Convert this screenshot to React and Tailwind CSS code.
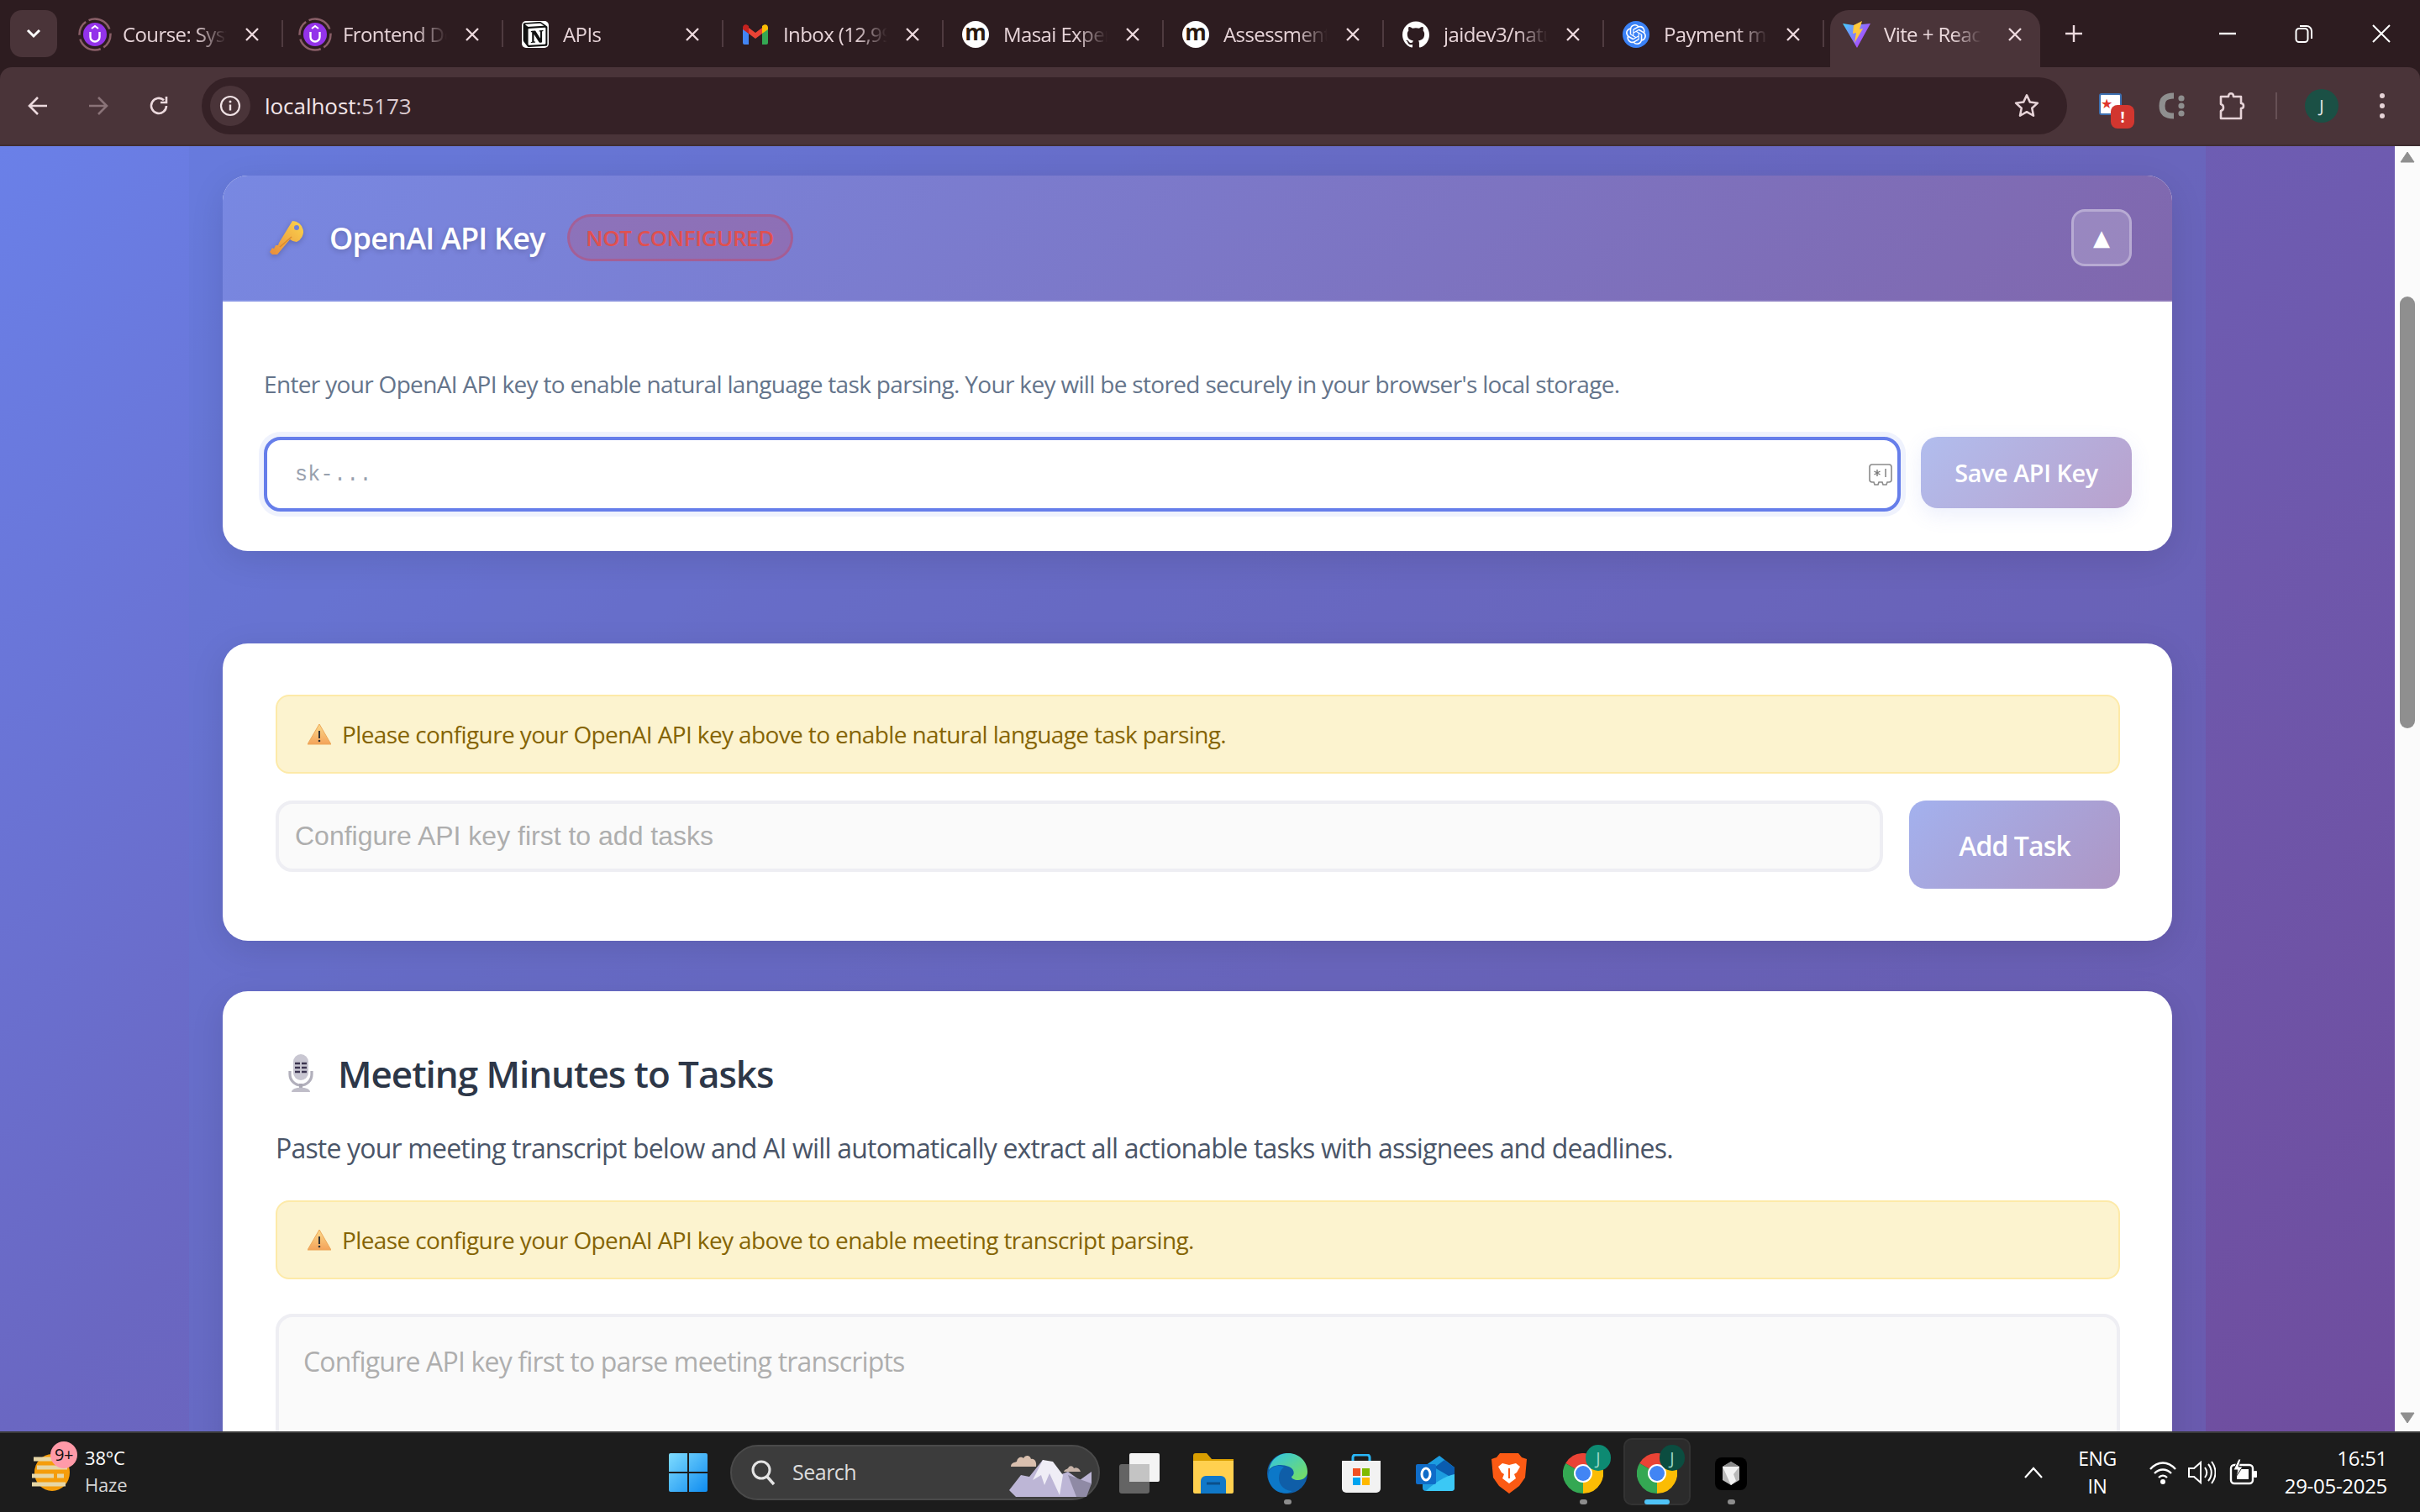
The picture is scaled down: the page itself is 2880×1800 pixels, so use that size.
import React from 'react'
import { SiNotion, SiGithub, SiOpenai } from 'react-icons/si'

const tabs = [
  { title: 'Course: System Design', icon: <UdemyIcon /> },
  { title: 'Frontend Developer', icon: <UdemyIcon /> },
  { title: 'APIs', icon: <NotionIcon /> },
  { title: 'Inbox (12,999) - Gmail', icon: <GmailIcon /> },
  { title: 'Masai Experience', icon: <MasaiIcon /> },
  { title: 'Assessment Portal', icon: <MasaiIcon /> },
  { title: 'jaidev3/natural-tasks', icon: <GithubIcon /> },
  { title: 'Payment methods', icon: <OpenaiIcon /> },
]

function UdemyIcon(){
  return (
    <svg width="40" height="40" viewBox="0 0 40 40">
      <circle cx="20" cy="20" r="18.5" fill="none" stroke="#8a5f68" strokeWidth="2.5" strokeDasharray="18 4 30 5" />
      <circle cx="20" cy="20" r="14" fill="#9333ea" />
      <path d="M14.5 17v6a5.5 5.5 0 0 0 11 0v-6" fill="none" stroke="#fff" strokeWidth="2.4" />
      <path d="M16 13l4-3 4 3" fill="none" stroke="#fff" strokeWidth="2" />
    </svg>
  )
}
function NotionIcon(){
  return <div className="w-[32px] h-[32px] bg-white rounded-[5px] flex items-center justify-center"><SiNotion size={30} color="#111" /></div>
}
function GmailIcon(){
  return (
    <svg width="30" height="24" viewBox="0 0 30 24">
      <path d="M0 4v18a2 2 0 0 0 2 2h5V11z" fill="#4285f4" />
      <path d="M30 4v18a2 2 0 0 1-2 2h-5V11z" fill="#34a853" />
      <path d="M7 11v-7l8 6 8-6v7l-8 6z" fill="#ea4335" />
      <path d="M0 4c0-4 4-5 7-2v9L0 6z" fill="#c5221f" />
      <path d="M30 4c0-4-4-5-7-2v9l7-5z" fill="#fbbc04" />
    </svg>
  )
}
function MasaiIcon(){
  return (
    <div className="w-[32px] h-[32px] rounded-full bg-white flex items-center justify-center text-[#2a1a10] text-[26px] leading-none font-bold pb-[5px]">m</div>
  )
}
function GithubIcon(){
  return <SiGithub size={32} color="#fff" />
}
function OpenaiIcon(){
  return <div className="w-[32px] h-[32px] rounded-full bg-[#3b82f6] flex items-center justify-center"><SiOpenai size={24} color="#fff" /></div>
}
function ViteIcon(){
  return (
    <svg width="34" height="32" viewBox="0 0 34 32">
      <defs>
        <linearGradient id="vt" x1="0" y1="0" x2="1" y2="0.6">
          <stop offset="0" stopColor="#41d1ff" />
          <stop offset="1" stopColor="#bd34fe" />
        </linearGradient>
      </defs>
      <path d="M0 3l13 2L33 3 17 32z" fill="url(#vt)" />
      <path d="M13 5L23 0l-3 10 4-1-10 17 2-12-4 1z" fill="#ffc83d" />
    </svg>
  )
}

function Tab({ title, icon }){
  return (
    <div className="w-[262px] h-[68px] shrink-0 flex items-center relative pl-[18px] pb-[11px]">
      <div className="w-[40px] flex justify-center shrink-0">{icon}</div>
      <span className="ml-[13px] w-[124px] overflow-hidden whitespace-nowrap text-[24px] tracking-[-0.6px] text-[#e6d3d7] [mask-image:linear-gradient(90deg,#000_70%,transparent)]">{title}</span>
      <CloseX className="ml-[21px]" />
      <div className="absolute right-0 top-[12px] h-[32px] w-[2px] bg-[#4f3b40]" />
    </div>
  )
}
function CloseX({ className = '' }){
  return (
    <svg width="18" height="18" viewBox="0 0 18 18" className={className}>
      <path d="M2 2l14 14M16 2L2 16" stroke="#ecd9dd" strokeWidth="2.4" />
    </svg>
  )
}

function TabStrip(){
  return (
    <div className="h-[80px] bg-[#2d1c20] flex items-end pl-[12px] shrink-0">
      <div className="w-[56px] h-[56px] mb-[12px] rounded-[14px] bg-[#4a3439] flex items-center justify-center mr-[7px]">
        <svg width="18" height="12" viewBox="0 0 18 12"><path d="M2 2l7 7 7-7" fill="none" stroke="#fff" strokeWidth="3" /></svg>
      </div>
      {tabs.map((t, i) => <Tab key={i} title={t.title} icon={t.icon} />)}
      <div className="w-[250px] h-[68px] ml-[7px] bg-[#4a3439] rounded-t-[22px] flex items-center pl-[15px] pb-[11px] shrink-0">
        <ViteIcon />
        <span className="ml-[15px] w-[116px] overflow-hidden whitespace-nowrap text-[24px] tracking-[-0.6px] text-[#ecdadd] [mask-image:linear-gradient(90deg,#000_70%,transparent)]">Vite + React</span>
        <CloseX className="ml-[31px]" />
      </div>
      <div className="h-[68px] flex items-center ml-[29px] pb-[12px]">
        <svg width="22" height="22" viewBox="0 0 22 22"><path d="M11 1v20M1 11h20" stroke="#ecd9dd" strokeWidth="2.4" /></svg>
      </div>
      <div className="ml-auto h-[80px] flex items-center">
        <svg width="20" height="4" viewBox="0 0 20 4" className="mr-[70px]"><path d="M0 2h20" stroke="#fff" strokeWidth="2.4" /></svg>
        <svg width="22" height="22" viewBox="0 0 22 22" className="mr-[70px]">
          <rect x="1.5" y="5" width="14" height="16" rx="3.5" fill="none" stroke="#fff" strokeWidth="2" />
          <path d="M6 2h8a6 6 0 0 1 6 6v9" fill="none" stroke="#fff" strokeWidth="2" />
        </svg>
        <svg width="22" height="22" viewBox="0 0 22 22" className="mr-[35px]"><path d="M1 1l20 20M21 1L1 21" stroke="#fff" strokeWidth="2" /></svg>
      </div>
    </div>
  )
}

function Toolbar(){
  return (
    <div className="h-[94px] bg-[#4a3439] rounded-t-[14px] border-b-[2px] border-[#3f2d31] flex items-start shrink-0 relative">
      <div className="flex items-center h-[92px] w-[240px] pl-[32px] shrink-0">
        <svg width="26" height="26" viewBox="0 0 26 26"><path d="M24 13H3M13 3L3 13l10 10" fill="none" stroke="#ecd9dd" strokeWidth="2.6" /></svg>
        <svg width="26" height="26" viewBox="0 0 26 26" className="ml-[46px]"><path d="M2 13h21M13 3l10 10-10 10" fill="none" stroke="#8a7378" strokeWidth="2.6" /></svg>
        <svg width="26" height="26" viewBox="0 0 26 26" className="ml-[46px]">
          <path d="M22 13a9 9 0 1 1-3-6.8" fill="none" stroke="#ecd9dd" strokeWidth="2.6" />
          <path d="M22 2v7h-7" fill="none" stroke="#ecd9dd" strokeWidth="2.6" />
        </svg>
      </div>
      <div className="w-[2220px] h-[68px] mt-[12px] rounded-full bg-[#352126] flex items-center pl-[10px] pr-[32px] shrink-0">
        <div className="w-[48px] h-[48px] rounded-full bg-[#4a3439] flex items-center justify-center">
          <svg width="26" height="26" viewBox="0 0 26 26">
            <circle cx="13" cy="13" r="11" fill="none" stroke="#f0e2e5" strokeWidth="2.2" />
            <path d="M13 11.5v7" stroke="#f0e2e5" strokeWidth="2.4" />
            <circle cx="13" cy="8" r="1.5" fill="#f0e2e5" />
          </svg>
        </div>
        <span className="ml-[17px] text-[26px] tracking-[-0.05px] text-[#f3e6e9]">localhost<span className="text-[#dccbd0]">:5173</span></span>
        <svg width="32" height="32" viewBox="0 0 24 24" className="ml-auto">
          <path d="M12 2.5l2.9 6.2 6.8.8-5 4.6 1.3 6.7-6-3.4-6 3.4 1.3-6.7-5-4.6 6.8-.8z" fill="none" stroke="#e6d3d7" strokeWidth="1.9" strokeLinejoin="round" />
        </svg>
      </div>
      <div className="flex items-center h-[92px] relative flex-1">
        <ExtIcon />
        <svg width="34" height="36" viewBox="0 0 34 36" className="ml-[42px]">
          <path d="M20 6C8 6 6 12 6 18C6 24 8 30 20 30" fill="none" stroke="#8f8f8f" strokeWidth="7" />
          <circle cx="29" cy="9" r="3.6" fill="#8f8f8f" /><circle cx="29" cy="18" r="3.6" fill="#8f8f8f" /><circle cx="29" cy="27" r="3.6" fill="#8f8f8f" />
        </svg>
        <svg width="34" height="36" viewBox="0 0 34 36" className="ml-[39px]">
          <path d="M3 7h9c0-5 6-5 6 0h9v8c4 0 4 6 0 6v12H3v-9c4-1 4-7 0-8z" fill="none" stroke="#e6d3d7" strokeWidth="2.6" strokeLinejoin="round" />
        </svg>
        <div className="ml-[34px] w-[2px] h-[32px] bg-[#665055]" />
        <div className="ml-[33px] w-[40px] h-[40px] rounded-full bg-[#1b5045] flex items-center justify-center text-[20px] text-[#e8e8e8]">J</div>
        <div className="ml-[49px] flex flex-col gap-[6px]">
          <div className="w-[6px] h-[6px] rounded-full bg-[#e6d3d7]" />
          <div className="w-[6px] h-[6px] rounded-full bg-[#e6d3d7]" />
          <div className="w-[6px] h-[6px] rounded-full bg-[#e6d3d7]" />
        </div>
      </div>
    </div>
  )
}
function ExtIcon(){
  return (
    <div className="relative w-[27px] h-[30px] ml-[38px]">
      <div className="w-[27px] h-[26px] bg-white border-[2px] border-[#3c6fb0] rounded-[3px] text-[#e0352b] text-[16px] leading-[20px]">★</div>
      <div className="absolute left-[14px] top-[14px] w-[28px] h-[28px] rounded-[8px] bg-[#d2362f] flex items-center justify-center text-white text-[18px] font-bold">!</div>
    </div>
  )
}

function KeyEmoji(){
  return (
    <svg width="42" height="42" viewBox="0 0 42 42">
      <defs>
        <linearGradient id="ke" x1="1" y1="0" x2="0" y2="1">
          <stop offset="0" stopColor="#fbd44c" />
          <stop offset="1" stopColor="#e88c3c" />
        </linearGradient>
      </defs>
      <path d="M28 1a13 13 0 0 1 5 25 13 13 0 0 1-8-3L10 41l-6 0-3-3 3-5 2 1 2-4 3 0 1-3z" fill="url(#ke)" />
      <path d="M27 20L13 32" stroke="#d98a2e" strokeWidth="1.5" />
      <circle cx="33" cy="9" r="3" fill="#6d80d8" />
    </svg>
  )
}
function WarnEmoji(){
  return (
    <svg width="28" height="25" viewBox="0 0 28 25" className="shrink-0">
      <defs>
        <linearGradient id="wn" x1="0" y1="0" x2="0" y2="1">
          <stop offset="0" stopColor="#fbd98a" />
          <stop offset="1" stopColor="#f4a35a" />
        </linearGradient>
      </defs>
      <path d="M14 0L28 24H0z" fill="url(#wn)" stroke="#eda85b" strokeWidth="1" />
      <path d="M14 8v9" stroke="#333" strokeWidth="2" />
      <circle cx="14" cy="20" r="1.3" fill="#333" />
    </svg>
  )
}
function MicEmoji(){
  return (
    <svg width="30" height="46" viewBox="0 0 30 46">
      <rect x="6" y="0" width="18" height="31" rx="9" fill="#c9c7d2" />
      <path d="M8 11h6M16 11h6M8 16h6M16 16h6M8 21h6M16 21h6" stroke="#3c3550" strokeWidth="2.4" />
      <path d="M2 20v4a13 13 0 0 0 26 0v-4" fill="none" stroke="#b2b0bc" strokeWidth="3.2" />
      <rect x="13" y="35" width="4" height="5" fill="#aaa8b4" />
      <path d="M4 45c0-7 22-7 22 0z" fill="#bfbdc8" />
    </svg>
  )
}

function Alert({ children }){
  return (
    <div className="h-[94px] rounded-[16px] bg-[#fcf3cf] border-[2px] border-[#fdeaa8] flex items-center pl-[36px] text-[28px] tracking-[-0.62px] text-[#856404]">
      <WarnEmoji />
      <span className="ml-[13px]">{children}</span>
    </div>
  )
}

function ApiKeyCard(){
  return (
    <div className="rounded-[30px] bg-white overflow-hidden shadow-[0_10px_40px_rgba(0,0,0,0.1)] mb-[110px]">
      <div className="h-[150px] bg-[linear-gradient(135deg,#7888e2,#8067ad)] border-b-[2px] border-white/10 flex items-center pl-[55px] pr-[48px]">
        <div className="drop-shadow-[0_2px_3px_rgba(0,0,0,0.2)]"><KeyEmoji /></div>
        <h3 className="ml-[30px] pt-[2px] text-[36px] font-semibold text-white tracking-[-0.8px] [text-shadow:0_2px_6px_rgba(0,0,0,0.2)]">OpenAI API Key</h3>
        <span className="ml-[26px] w-[269px] h-[56px] rounded-full bg-[#dc3545]/20 border-[3px] border-[#dc3545]/30 flex items-center justify-center text-[26px] font-semibold text-[#e0504f] tracking-[-0.45px]">NOT CONFIGURED</span>
        <button className="ml-auto w-[72px] h-[68px] rounded-[16px] bg-white/20 border-[3px] border-white/30 text-white text-[26px] leading-none font-['DejaVu_Sans',sans-serif]">▲</button>
      </div>
      <div className="pt-[77px] pb-[47px] pl-[49px] pr-[48px]">
        <p className="h-[42px] leading-[42px] text-[28px] tracking-[-0.67px] text-[#64748b] mb-[42px]">Enter your OpenAI API key to enable natural language task parsing. Your key will be stored securely in your browser's local storage.</p>
        <div className="flex gap-[24px] items-start">
          <div className="relative flex-1">
            <input readOnly type="text" placeholder="sk-..." className="w-full h-[89px] rounded-[20px] border-[4px] border-[#667eea] bg-white pl-[33px] pr-[60px] pt-[2px] outline-none shadow-[0_0_0_6px_rgba(102,126,234,0.1)] font-['Liberation_Mono',monospace] text-[25px] tracking-[0.3px] placeholder:text-[#98a0ae]" />
            <svg width="28" height="26" viewBox="0 0 28 26" className="absolute right-[10px] top-[32px]">
              <path d="M4 1h20a3 3 0 0 1 3 3v15a3 3 0 0 1-3 3h-2l-1 3h-4l-1-3h-4l-1 3H7l-1-3H4a3 3 0 0 1-3-3V4a3 3 0 0 1 3-3z" fill="none" stroke="#8a8a8a" strokeWidth="1.6" />
              <path d="M10 7v8M6.5 9l7 4M13.5 9l-7 4M20 6v10" stroke="#7a7a7a" strokeWidth="1.4" />
            </svg>
          </div>
          <button className="w-[251px] h-[85px] rounded-[20px] bg-[linear-gradient(135deg,#b1bdee,#b9a1cc)] text-white text-[28.8px] font-semibold tracking-[-0.4px] shadow-[0_8px_24px_rgba(102,126,234,0.12)]">Save API Key</button>
        </div>
      </div>
    </div>
  )
}

function AddTaskCard(){
  return (
    <div className="rounded-[30px] bg-white shadow-[0_10px_40px_rgba(0,0,0,0.1)] pt-[61px] pb-[62px] pl-[63px] pr-[62px] mb-[60px]">
      <Alert>Please configure your OpenAI API key above to enable natural language task parsing.</Alert>
      <div className="flex gap-[31px] items-start mt-[32px]">
        <input readOnly type="text" placeholder="Configure API key first to add tasks" className="flex-1 min-w-0 h-[85px] rounded-[20px] border-[4px] border-[#eeeef3] bg-[#fafafa] pl-[19px] outline-none font-['Liberation_Sans',sans-serif] text-[32px] placeholder:text-[#aeaeae]" />
        <button className="w-[251px] h-[105px] pt-[2px] rounded-[20px] bg-[linear-gradient(135deg,#a3b1ee,#ae96c4)] text-white text-[32px] font-semibold tracking-[-0.9px]">Add Task</button>
      </div>
    </div>
  )
}

function MeetingCard(){
  return (
    <div className="rounded-[30px] bg-white shadow-[0_10px_40px_rgba(0,0,0,0.1)] pt-[62px] pl-[63px] pr-[62px] pb-[60px]">
      <div className="flex items-center h-[72px]">
        <div className="ml-[15px] mr-[29px] flex"><MicEmoji /></div>
        <h2 className="text-[44px] font-semibold text-[#2d3748] tracking-[-1.03px]">Meeting Minutes to Tasks</h2>
      </div>
      <p className="mt-[29px] h-[48px] leading-[48px] text-[32px] tracking-[-0.82px] text-[#4a5568]">Paste your meeting transcript below and AI will automatically extract all actionable tasks with assignees and deadlines.</p>
      <div className="mt-[38px]">
        <Alert>Please configure your OpenAI API key above to enable meeting transcript parsing.</Alert>
      </div>
      <textarea readOnly placeholder="Configure API key first to parse meeting transcripts" className="block mt-[41px] w-full h-[300px] resize-none rounded-[20px] border-[4px] border-[#eeeef3] bg-[#fafafa] px-[29px] pt-[29px] outline-none text-[32px] tracking-[-0.82px] placeholder:text-[#aeaeae]" />
    </div>
  )
}

function Scrollbar(){
  return (
    <div className="w-[30px] shrink-0 bg-[#fbfbfb] flex flex-col items-center pt-[6px] pb-[9px]">
      <svg width="18" height="14" viewBox="0 0 18 14"><path d="M9 1l8 12H1z" fill="#8f8f8f" stroke="#8f8f8f" strokeLinejoin="round" /></svg>
      <div className="mt-[159px] w-[18px] h-[514px] rounded-full bg-[#8f8f8f]" />
      <svg width="18" height="14" viewBox="0 0 18 14" className="mt-auto"><path d="M9 13L1 1h16z" fill="#8f8f8f" stroke="#8f8f8f" strokeLinejoin="round" /></svg>
    </div>
  )
}

function WindowsLogo(){
  return (
    <svg width="46" height="46" viewBox="0 0 46 46">
      <defs>
        <linearGradient id="wl" x1="0" y1="0" x2="1" y2="1">
          <stop offset="0" stopColor="#7fdcff" />
          <stop offset="1" stopColor="#0f8cf0" />
        </linearGradient>
      </defs>
      <path d="M0 2a2 2 0 0 1 2-2h20v22H0zM24 0h20a2 2 0 0 1 2 2v20H24zM0 24h22v22H2a2 2 0 0 1-2-2zM24 24h22v20a2 2 0 0 1-2 2H24z" fill="url(#wl)" />
    </svg>
  )
}
function Mountains(){
  return (
    <svg width="100" height="56" viewBox="0 0 100 56" className="absolute right-[6px] top-[4px]">
      <path d="M0 48L14 30l10 2L40 12l12 10 8 8 10-4 14 10 14-10v14l-10 18H10z" fill="#bdb6d6" />
      <path d="M40 12l-12 24 10-6 4 12 6-14 12 26 4-24-12-16z" fill="#efedf6" />
      <path d="M70 30l10 26h12l6-16z" fill="#8f8aa5" />
      <path d="M2 20c0-5 5-5 7-6 1-6 6-6 8-4 2-4 8-4 9 1 4-1 7 3 6 9z" fill="#d9bfae" />
      <path d="M65 26c1-3 4-3 5-4 2-4 6-3 7 0 4-2 7 1 8 4z" fill="#c7b3a8" />
    </svg>
  )
}
function Edge(){
  return (
    <svg width="48" height="48" viewBox="0 0 48 48">
      <defs>
        <linearGradient id="eg" x1="0" y1="0" x2="1" y2="1">
          <stop offset="0" stopColor="#2fc4e8" />
          <stop offset="1" stopColor="#7be05a" />
        </linearGradient>
      </defs>
      <circle cx="24" cy="24" r="24" fill="#0f5ea8" />
      <path d="M2 20C5 6 15 0 25 0c13 0 23 10 23 22 0 6-5 10-11 10-5 0-8-2-8-4 4-2 4-9-3-12C16 12 6 14 2 20z" fill="url(#eg)" />
      <path d="M14 30c0 9 8 15 16 15-8 5-20 2-25-6C1 33 0 26 3 20c5-6 13-6 17-3-4 2-6 7-6 13z" fill="#0c78c8" />
    </svg>
  )
}
function StoreIcon(){
  return (
    <svg width="46" height="46" viewBox="0 0 46 46">
      <path d="M13 8V4a3 3 0 0 1 3-3h14a3 3 0 0 1 3 3v4" fill="none" stroke="#29b6f6" strokeWidth="3" />
      <path d="M0 8h46v33a5 5 0 0 1-5 5H5a5 5 0 0 1-5-5z" fill="#f2f2f2" />
      <rect x="13" y="17" width="9" height="9" fill="#f25022" />
      <rect x="24" y="17" width="9" height="9" fill="#7fba00" />
      <rect x="13" y="28" width="9" height="9" fill="#00a4ef" />
      <rect x="24" y="28" width="9" height="9" fill="#ffb900" />
    </svg>
  )
}
function Outlook(){
  return (
    <svg width="46" height="42" viewBox="0 0 46 42">
      <path d="M8 14L28 0l18 14v24a4 4 0 0 1-4 4H12a4 4 0 0 1-4-4z" fill="#1c9ce0" />
      <path d="M22 14L34 5l12 9v14z" fill="#0a5cb0" />
      <path d="M12 42c10-10 24-18 34-20v16a4 4 0 0 1-4 4z" fill="#3bc8f5" />
      <rect x="0" y="10" width="24" height="24" rx="2" fill="#0f6cc8" />
      <ellipse cx="12" cy="22" rx="5" ry="7" fill="none" stroke="#fff" strokeWidth="3" />
    </svg>
  )
}
function Brave(){
  return (
    <svg width="42" height="48" viewBox="0 0 42 48">
      <path d="M10 0h22l4 5 6 2-2 22-7 10-12 9-12-9-7-10L0 7l6-2z" fill="#fb5a14" />
      <path d="M21 14l-8-2-5 4 4 7 3 2-2 5 8 6 8-6-2-5 3-2 4-7-5-4z" fill="#fff" />
      <path d="M21 18v12" stroke="#fb5a14" strokeWidth="2" />
    </svg>
  )
}
function Folder(){
  return (
    <svg width="48" height="48" viewBox="0 0 48 48">
      <path d="M0 3a3 3 0 0 1 3-3h13l6 7h26v8H0z" fill="#d99e00" />
      <path d="M0 9h48v37a2 2 0 0 1-2 2H2a2 2 0 0 1-2-2z" fill="#ffd04f" />
      <path d="M9 48V33a6 6 0 0 1 6-6h18a6 6 0 0 1 6 6v15z" fill="#1078c8" />
      <path d="M16 36h16" stroke="#0a4f8a" strokeWidth="3" />
    </svg>
  )
}
function TaskView(){
  return (
    <svg width="48" height="48" viewBox="0 0 48 48">
      <rect x="12" y="0" width="36" height="34" rx="2" fill="#f4f4f4" />
      <rect x="0" y="13" width="36" height="35" rx="3" fill="#777" fillOpacity="0.8" />
      <rect x="12" y="13" width="24" height="21" fill="#c4c4c4" />
    </svg>
  )
}
function ChromeIcon({ badge }){
  return (
    <div className="relative w-[48px] h-[48px]">
      <svg width="48" height="48" viewBox="0 0 48 48">
        <path d="M24 24L3.2 12A24 24 0 0 1 44.8 12z" fill="#ea4335" />
        <path d="M24 24L44.8 12A24 24 0 0 1 24 48z" fill="#fbbc04" />
        <path d="M24 24L24 48A24 24 0 0 1 3.2 12z" fill="#34a853" />
        <circle cx="24" cy="24" r="11" fill="#fff" />
        <circle cx="24" cy="24" r="9" fill="#4285f4" />
      </svg>
      <div className={`absolute left-[27px] top-[-10px] w-[30px] h-[31px] rounded-full flex items-center justify-center text-[20px] text-[#9ad7c8] ${badge}`}>J</div>
    </div>
  )
}
function Gem(){
  return (
    <div className="w-[38px] h-[39px] rounded-[8px] bg-black flex items-center justify-center">
      <svg width="24" height="28" viewBox="0 0 24 28">
        <path d="M12 0l10 6v16l-10 6-10-6V6z" fill="#b9b9b9" />
        <path d="M2 6l20 0-7 9 3 8-6 5z" fill="#f2f2f2" />
        <path d="M12 0l10 6H2z" fill="#8a8a8a" />
      </svg>
    </div>
  )
}
function TaskApp({ children, dot, className = '' }){
  return (
    <div className={`relative w-[88px] h-[96px] flex items-center justify-center shrink-0 ${className}`}>
      {children}
      {dot && <div className="absolute left-[40px] top-[79px] w-[9px] h-[6px] rounded-full bg-[#8d8d8d]" />}
    </div>
  )
}

function Taskbar(){
  return (
    <div className="h-[96px] bg-[#1c1c1c] border-t-[2px] border-[#3a3a3a] flex items-stretch shrink-0 text-white">
      <div className="relative w-[796px] shrink-0 flex items-center pl-[38px]">
        <svg width="46" height="44" viewBox="0 0 46 44">
          <ellipse cx="24" cy="22" rx="21" ry="22" fill="#f59d0b" />
          <path d="M2 6h22M6 16h36M0 26h26M30 26h8M0 36h40" stroke="#e6d6a6" strokeWidth="5" />
        </svg>
        <div className="absolute left-[60px] top-[10px] w-[32px] h-[32px] rounded-full bg-[#ff9aa8] flex items-center justify-center text-[#111] text-[20px] tracking-[-0.5px]">9+</div>
        <div className="absolute left-[101px] top-[13px] text-[22px] leading-[32px] tracking-[-0.2px]">
          <div>38°C</div>
          <div className="text-[#d6d6d6]">Haze</div>
        </div>
      </div>
      <div className="shrink-0 flex items-center"><WindowsLogo /></div>
      <div className="relative ml-[27px] my-[14px] w-[440px] rounded-full bg-[#3c3c3c] border-[2px] border-[#4a4a4a] flex items-center pl-[22px] shrink-0">
        <svg width="30" height="32" viewBox="0 0 30 32">
          <circle cx="13" cy="13" r="10" fill="none" stroke="#e4e4e4" strokeWidth="3" />
          <path d="M20 21l8 9" stroke="#e4e4e4" strokeWidth="3.4" />
        </svg>
        <span className="ml-[20px] text-[25px] tracking-[-0.5px] text-[#dcdcdc]">Search</span>
        <Mountains />
      </div>
      <TaskApp className="ml-[3px]"><TaskView /></TaskApp>
      <TaskApp><Folder /></TaskApp>
      <TaskApp dot><Edge /></TaskApp>
      <TaskApp><StoreIcon /></TaskApp>
      <TaskApp><Outlook /></TaskApp>
      <TaskApp><Brave /></TaskApp>
      <TaskApp dot><ChromeIcon badge="bg-[#0d8a72]" /></TaskApp>
      <TaskApp>
        <div className="absolute left-[4px] top-[6px] w-[80px] h-[80px] rounded-[10px] bg-[#2b2b2b] border-[2px] border-[#333]" />
        <div className="relative"><ChromeIcon badge="bg-[#0b4d40]" /></div>
        <div className="absolute left-[29px] top-[79px] w-[30px] h-[6px] rounded-full bg-[#4fc3f7]" />
      </TaskApp>
      <TaskApp dot><Gem /></TaskApp>
      <div className="flex-1 flex items-center relative">
        <svg width="24" height="14" viewBox="0 0 24 14" className="ml-[304px]"><path d="M2 13L12 2l10 11" fill="none" stroke="#fff" strokeWidth="2.2" /></svg>
        <div className="ml-[29px] w-[70px] text-center text-[23px] leading-[33px] tracking-[-0.4px]">
          <div>ENG</div>
          <div>IN</div>
        </div>
        <svg width="34" height="30" viewBox="0 0 34 30" className="ml-[26px]">
          <path d="M2 11C11 1 23 1 32 11M7 16c6-6 14-6 20 0M12 21c3-3 7-3 10 0" fill="none" stroke="#fff" strokeWidth="2.4" />
          <circle cx="17" cy="26" r="3" fill="#fff" />
        </svg>
        <svg width="34" height="30" viewBox="0 0 34 30" className="ml-[12px]">
          <path d="M2 10h6l8-7v24l-8-7H2z" fill="none" stroke="#fff" strokeWidth="2" />
          <path d="M21 9c3 4 3 8 0 12M25 5c5 6 5 14 0 20M29 2c6 8 6 18 0 26" fill="none" stroke="#fff" strokeWidth="2" />
        </svg>
        <svg width="34" height="32" viewBox="0 0 34 32" className="ml-[16px]">
          <rect x="2" y="7" width="26" height="22" rx="4" fill="none" stroke="#fff" strokeWidth="2.4" />
          <rect x="9" y="12" width="14" height="12" fill="#fff" />
          <rect x="29" y="14" width="4" height="8" rx="1" fill="#fff" />
          <path d="M11 0L5 13h5l-2 8 8-12h-5l3-9z" fill="#fff" stroke="#1c1c1c" strokeWidth="1" />
        </svg>
      </div>
      <div className="shrink-0 w-[162px] pr-[39px] pt-[13px] text-right text-[24px] leading-[33px] tracking-[-0.3px] whitespace-nowrap">
        <div>16:51</div>
        <div>29-05-2025</div>
      </div>
    </div>
  )
}

export default function App(){
  return (
    <div className="h-screen w-full flex flex-col overflow-hidden bg-[#2d1c20] font-['Open_Sans',sans-serif]">
      <TabStrip />
      <Toolbar />
      <div className="flex-1 min-h-0 flex">
        <main className="flex-1 min-w-0 bg-[linear-gradient(135deg,#6a80e8,#6a67c2_35%,#6e5bb0_65%,#6f4d9e)] overflow-hidden">
          <div className="w-[2400px] ml-[225px] min-h-full bg-[rgba(97,119,207,0.3)] px-[40px] pt-[35px]">
            <ApiKeyCard />
            <AddTaskCard />
            <MeetingCard />
          </div>
        </main>
        <Scrollbar />
      </div>
      <Taskbar />
    </div>
  )
}
